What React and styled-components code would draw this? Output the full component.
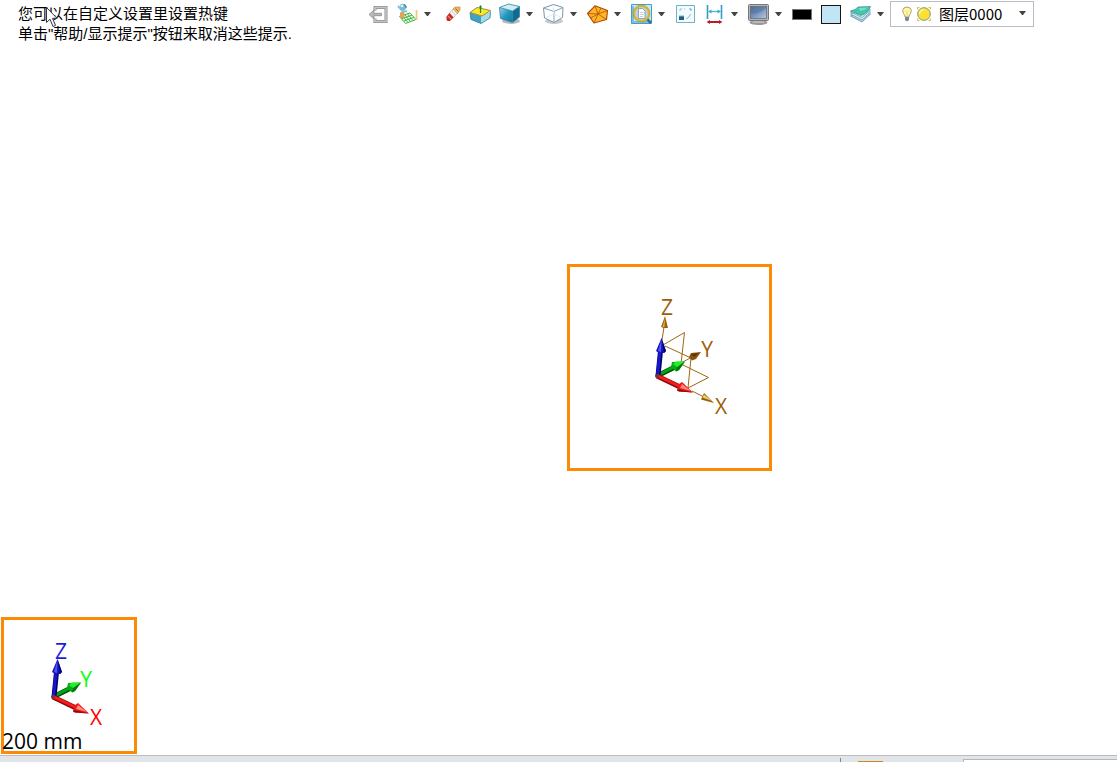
import React, { useState } from "react";
import styled, { createGlobalStyle } from "styled-components";

const GlobalStyle = createGlobalStyle`
  body {
    margin: 0;
    background: #fff;
    font-family: "Liberation Sans", "Noto Sans CJK SC", sans-serif;
    color: #000;
  }
`;

const Page = styled.div`
  display: flex;
  flex-direction: column;
  height: 100vh;
  overflow: hidden;
`;

const Header = styled.header`
  display: flex;
  align-items: flex-start;
`;

const Hints = styled.div`
  position: relative;
  flex: 0 0 349px;
  padding: 4px 0 0 18px;
  font-size: 15px;
  line-height: 20px;
  white-space: nowrap;
`;

const HintLine = styled.p`
  margin: 0;
`;

const Pointer = styled.svg`
  position: absolute;
  left: 45px;
  top: 6px;
`;

const Toolbar = styled.div`
  display: flex;
  align-items: center;
  gap: 2px;
  padding-top: 1px;
`;

const Tools = styled.div`
  display: flex;
  align-items: center;
  gap: 5px;
`;

const ToolGroup = styled.div`
  display: flex;
`;

const ToolButton = styled.button`
  display: flex;
  align-items: center;
  justify-content: center;
  width: ${(props) => (props.$narrow ? "15px" : "24px")};
  height: 24px;
  padding: 0;
  border: 0;
  background: transparent;
`;

const LayerBox = styled.label`
  position: relative;
  display: flex;
  align-items: center;
  gap: 3px;
  box-sizing: border-box;
  width: 144px;
  height: 26px;
  padding-left: 10px;
  border: 1px solid #b9bdc8;
  background: #fff;
`;

const LayerSelect = styled.select`
  appearance: none;
  flex: 1;
  min-width: 0;
  height: 24px;
  padding: 0 0 2px 4px;
  border: 0;
  background: transparent;
  color: #000;
  font-family: "Noto Sans CJK SC", sans-serif;
  font-size: 15px;
`;

const SelectCaret = styled.span`
  position: absolute;
  right: 7px;
  top: 9px;
  display: flex;
  pointer-events: none;
`;

const Canvas = styled.main`
  position: relative;
  flex: 1;
  min-height: 0;
`;

const Frame = styled.section`
  position: absolute;
  box-sizing: border-box;
  border: 3px solid #fb8b05;
`;

const OriginFrame = styled(Frame)`
  left: 567px;
  top: 220px;
  width: 205px;
  height: 207px;
`;

const CornerFrame = styled(Frame)`
  left: 1px;
  bottom: 1px;
  width: 136px;
  height: 137px;
`;

const Drawing = styled.svg`
  display: block;
  font-family: "Open Sans", sans-serif;
  font-size: 21px;
`;

const ScaleLabel = styled.div`
  position: absolute;
  left: -2px;
  bottom: -4px;
  font-family: "Open Sans", sans-serif;
  font-size: 21px;
  line-height: 28px;
  white-space: nowrap;
`;

const StatusBar = styled.footer`
  display: flex;
  align-items: flex-end;
  height: 6px;
  border-top: 1px solid #b9bcc1;
  background: #e1e5e8;
`;

const StatusMessage = styled.div`
  box-sizing: border-box;
  width: 841px;
  height: 4px;
  border-right: 1px solid #81868c;
`;

const StatusTab = styled.div`
  width: 25px;
  height: 1px;
  margin: 0 80px 0 17px;
  background: #c88a1e;
`;

const StatusField = styled.div`
  flex: 1;
  height: 2px;
  border: 1px solid #b4b8bd;
  border-width: 1px 0 0 1px;
  background: #fff;
`;

const Caret = () => (
  <svg width="7" height="4" viewBox="0 0 7 4">
    <path d="M0 0H7L4 4H3Z" fill="#444" />
  </svg>
);

const Icon = ({ children }) => (
  <svg width="24" height="24" viewBox="0 0 24 24" fill="none">
    {children}
  </svg>
);

const ExitIcon = () => (
  <Icon>
    <path d="M8 8.500V5.500H19V19.500H8V16.500" stroke="#8e8e8e" strokeWidth="3" />
    <path d="M8 8V5.500H19V19.500H8V17" stroke="#c6c6c6" strokeWidth="1.500" />
    <path d="M2 12.500L7 8V11.300H14.500V13.700H7V17Z" fill="#b8b8b8" stroke="#8a8a8a" strokeWidth=".8" />
  </Icon>
);

const PlaneIcon = () => (
  <Icon>
    <path d="M3.500 14.500L14 11L20 17.500L9.500 21.500Z" fill="#f2fdef" stroke="#3fba3f" />
    <path d="M6 13.500L12 20.500M8.700 12.600L14.500 19.600M11.300 11.700L17 18.600M5.500 16.800L16 13.200M7.500 19L18 15.300" stroke="#3fba3f" />
    <path d="M20.500 8V18" stroke="#f2c57c" strokeWidth="1.800" />
    <path d="M2 4L6.500 9L11 9.500" stroke="#7cc5dc" strokeWidth="2" />
    <circle cx="7" cy="5" r="3.300" fill="#79bcd6" />
    <circle cx="6" cy="4" r="1.300" fill="#e6f7fb" />
    <path d="M8 2.500L10 4V6" stroke="#4f6f80" />
    <rect x="4" y="10" width="4.500" height="6" rx="1" fill="#e5a05e" />
  </Icon>
);

const EraserIcon = () => (
  <Icon>
    <path d="M12.500 7.500L15 5H20V8L17 12Z" fill="#f2b45a" stroke="#b98238" strokeWidth=".6" />
    <path d="M15.500 6.500L18.500 9.500" stroke="#a9692d" />
    <path d="M9.500 11L13 7L17 11.500L13.500 15.500Z" fill="#faf8f5" stroke="#aaa" strokeWidth=".7" />
    <path d="M11.500 9L15.500 13.500" stroke="#dedbd8" strokeWidth="1.500" />
    <path d="M6.500 14.500L9.500 11L13.500 15.500L10 19H7.500L6.500 17.500Z" fill="#c4281f" />
    <path d="M8 14L11.500 17.500" stroke="#e98478" strokeWidth="1.200" />
  </Icon>
);

const FaceBoxIcon = () => (
  <Icon>
    <path d="M1 10.500L12 14V21.500L2 17.500Z" fill="#3fa2c4" />
    <path d="M12 14L21.500 9.500L21 16L12 21.500Z" fill="#a7dcea" />
    <path d="M1 10.500L2 17.500L12 21.500L21 16L21.500 9.500" stroke="#2b7794" strokeWidth=".8" />
    <path d="M1 10.500L8 5.500L21.500 8.500L13 14Z" fill="#ffe62a" stroke="#978f32" />
    <path d="M11.500 4V11" stroke="#238b3a" strokeWidth="1.200" />
    <path d="M9.800 5.500L11.500 3L13.200 5.500Z" fill="#238b3a" />
  </Icon>
);

const ShadedIcon = () => (
  <Icon>
    <defs>
      <linearGradient id="cubeFront" x1="0" y1="0" x2="1" y2="1">
        <stop offset="0" stopColor="#9fd6e8" />
        <stop offset="0.5" stopColor="#2597be" />
        <stop offset="1" stopColor="#17779e" />
      </linearGradient>
    </defs>
    <ellipse cx="13" cy="19" rx="9" ry="3" fill="#b9b9b9" />
    <path d="M1.500 5.500L14.500 9V20.500L2.500 16.500Z" fill="url(#cubeFront)" />
    <path d="M14.500 9L21.500 4.500V15L14.500 20.500Z" fill="#116b91" />
    <path d="M1.500 5.500L10.500 2L21.500 4.500L14.500 9Z" fill="#d2eef5" />
    <path d="M1.500 5.500L10.500 2L21.500 4.500V15L14.500 20.500L2.500 16.500ZM1.500 5.500L14.500 9V20M14.500 9L21.500 4.500" stroke="#2885a7" strokeWidth=".8" />
  </Icon>
);

const WireIcon = () => (
  <Icon>
    <ellipse cx="12" cy="19" rx="9" ry="3" fill="#c9c9c9" />
    <path d="M11.500 2.500L21 5.500L20.500 15.500L12 20.500L2.500 16L1.500 6Z" fill="#fff" stroke="#7797ab" />
    <path d="M1.500 6L12 9.500L21 5.500M12 9.500V20.500" stroke="#83a7bd" />
    <path d="M11.500 3V12L3 16M11.500 12L20 15.500" stroke="#dceaf0" strokeWidth=".8" />
  </Icon>
);

const MeshIcon = () => (
  <Icon>
    <path
      d="M9 3.800L21.500 8.500L20.500 17.500L8 21L1.500 11.500Z"
      fill="#ffb727"
      stroke="#ad4c08"
      strokeWidth="1.200"
      strokeLinejoin="round"
    />
    <path d="M9 3.800L12 12L8 21M1.500 11.500L12 12L21.500 8.500M12 12L20.500 17.500M4.500 16L12 12L15 6.200" stroke="#b9570c" strokeWidth=".9" />
  </Icon>
);

const ZoomIcon = () => (
  <Icon>
    <path d="M1.500 2.500H21.500V21.500H1.500Z" fill="#c4e9f7" stroke="#469fc3" />
    <path d="M3 4V20H20" stroke="#79c1dc" strokeWidth="2" />
    <path d="M16.500 16.500L21 21" stroke="#2a7396" strokeWidth="2.500" />
    <circle cx="11.500" cy="11.500" r="7.500" fill="#b9d4de" stroke="#e3b52f" strokeWidth="2" />
    <circle cx="11.500" cy="11.500" r="8.500" stroke="#9c863e" strokeWidth=".5" />
    <path d="M8.500 6.500H12.500L15 9V16.500H8.500Z" fill="#fff" stroke="#7c929d" strokeWidth=".8" />
    <path d="M10 10.500H13.500M10 12.500H13.500M10 14.500H13.500" stroke="#b9c8ce" strokeWidth=".8" />
  </Icon>
);

const FitIcon = () => (
  <Icon>
    <path d="M2.500 3.500H20.500V20.500H2.500Z" fill="#f4fbfd" stroke="#6cb4cb" />
    <path d="M6 9V7H8M10 7H11" stroke="#87c2d3" />
    <path d="M15 7H17V9M16.500 12L15 15L12 17" stroke="#7fbfd1" />
    <path d="M15.500 6L18 7L17 9Z" fill="#7fbfd1" />
    <rect x="5" y="14" width="5" height="4" fill="#235e7d" />
    <path d="M5 14H10" stroke="#70b6d1" />
  </Icon>
);

const MeasureIcon = () => (
  <Icon>
    <path d="M4.500 3V17M18.500 3V17" stroke="#319ec4" strokeWidth="1.600" />
    <path d="M6 9.500H17" stroke="#52b6d3" strokeWidth="1.300" />
    <path d="M5 9.500L8.500 7.500V11.500ZM18 9.500L14.500 7.500V11.500Z" fill="#42aaca" />
    <path d="M5 20H18" stroke="#b91e27" strokeWidth="2" />
    <path d="M3.500 20L7 18V22ZM19.500 20L16 18V22Z" fill="#b91e27" />
  </Icon>
);

const MonitorIcon = () => (
  <Icon>
    <defs>
      <linearGradient id="screen" x1="0" y1="0" x2="1" y2="1">
        <stop offset="0" stopColor="#4e6d98" />
        <stop offset="0.5" stopColor="#7896bd" />
        <stop offset="1" stopColor="#b7c8dc" />
      </linearGradient>
    </defs>
    <ellipse cx="11.500" cy="20.500" rx="9" ry="2.500" fill="#999" />
    <path d="M7 18H16L18 21H5Z" fill="#b9b9b9" />
    <rect x="1.500" y="2.500" width="20" height="16" rx="1" fill="#b5b5b5" stroke="#777" />
    <rect x="3.500" y="4.500" width="16" height="12" fill="url(#screen)" stroke="#596679" strokeWidth=".7" />
    <path d="M4 12Q13 12 19 6V5H4Z" fill="#526c92" opacity=".45" />
  </Icon>
);

const LineColorIcon = () => (
  <Icon>
    <rect x="1.500" y="7.500" width="19" height="10" fill="#000" stroke="#777" />
  </Icon>
);

const FillColorIcon = () => (
  <Icon>
    <rect x="1.500" y="3.500" width="19" height="18" fill="#c0e6f5" stroke="#21100f" />
  </Icon>
);

const LayersIcon = () => (
  <Icon>
    <path d="M1.500 14L12 10L21.500 12L13 20Z" fill="#b7d2df" stroke="#6290a5" strokeWidth=".8" />
    <path d="M1.500 12L12 8L21.500 10L13 18Z" fill="#d9eef5" stroke="#5e9cb3" strokeWidth=".8" />
    <path d="M1.500 10L11 6L21.500 8L13 15.500Z" fill="#e5f6f8" stroke="#5e9cb3" strokeWidth=".8" />
    <path d="M1.500 9Q7 8 9 5L21.500 4.500Q19 11 12 13.500Z" fill="#43c6ae" stroke="#278f80" strokeWidth=".7" />
    <path d="M10 6L19 5.500Q16 8 11 9Z" fill="#7dddca" />
  </Icon>
);

const BulbIcon = () => (
  <svg width="12" height="16" viewBox="0 0 12 16">
    <path d="M4 11Q4 9 2.500 7.500Q.5 4 3 2Q6 0 9 2Q11.500 4 9.500 7.500Q8 9 8 11Z" fill="#fff9ae" stroke="#a8935b" strokeWidth=".9" />
    <path d="M4 11H8V14L6 15.500L4 14Z" fill="#78899b" />
    <path d="M5.500 10V6L4 4M6.500 10V6L8 4" stroke="#f0d779" strokeWidth=".6" fill="none" />
  </svg>
);

const SunIcon = () => (
  <svg width="16" height="16" viewBox="0 0 16 16">
    <path d="M1 1H4L1 4ZM15 1V4L12 1ZM1 15V12L4 15ZM15 15H12L15 12Z" fill="#e3c537" />
    <circle cx="8" cy="8" r="6.300" fill="#ffdf32" stroke="#6d9d8d" />
    <path d="M3.500 8Q4 4 8 3.500" stroke="#fff3a0" strokeWidth="1.500" fill="none" />
  </svg>
);

const tools = [
  { name: "退出", Glyph: ExitIcon },
  { name: "工作平面", Glyph: PlaneIcon, menu: true },
  { name: "擦除", Glyph: EraserIcon },
  { name: "面", Glyph: FaceBoxIcon },
  { name: "着色", Glyph: ShadedIcon, menu: true },
  { name: "线框", Glyph: WireIcon, menu: true },
  { name: "网格", Glyph: MeshIcon, menu: true },
  { name: "缩放", Glyph: ZoomIcon, menu: true },
  { name: "适合窗口", Glyph: FitIcon },
  { name: "测量", Glyph: MeasureIcon, menu: true },
  { name: "显示", Glyph: MonitorIcon, menu: true },
  { name: "线条颜色", Glyph: LineColorIcon },
  { name: "填充颜色", Glyph: FillColorIcon },
  { name: "图层", Glyph: LayersIcon, menu: true },
];

// x, y, z arrows around a local origin
const Triad = ({ x, y }) => (
  <g transform={`translate(${x} ${y})`}>
    <path d="M1 -1L17 -9" stroke="#054d05" strokeWidth="5" />
    <path d="M1 -1.500L17 -9.500" stroke="#00a814" strokeWidth="3" />
    <path d="M27 -14.500L14 -14L13 -9L18 -4.500L21 -6Z" fill="#00ad13" />
    <path d="M27 -14.500L18 -14.500L15 -12L19 -9Z" fill="#24ed31" />
    <path d="M27 -14.500L19 -8.500L18 -4.500L21 -6Z" fill="#067209" />
    <path d="M0 0L2.500 -25" stroke="#000066" strokeWidth="5" />
    <path d="M-.5 0L2 -25" stroke="#1616cf" strokeWidth="3" />
    <path d="M3.500 -38L-2 -25L1 -23H6L8 -25Z" fill="#1414be" />
    <path d="M3.500 -37L0 -25L3 -24Z" fill="#5555ed" />
    <path d="M3.500 -38L8 -25L6 -23Z" fill="#000078" />
    <path d="M-1 0L23 11.500" stroke="#900808" strokeWidth="5" />
    <path d="M-1 -.5L23 11" stroke="#f51d1d" strokeWidth="3" />
    <path d="M35 16.500L24 6L21 8L19 14.500L21 15.500Z" fill="#ef1717" />
    <path d="M33 15L24 8L22 12Z" fill="#ff8b82" />
    <path d="M35 16.500L20 13L19 14.500L21 15.500Z" fill="#970b0b" />
    <circle cx="-1" cy="0" r="2" fill="#6e3349" />
  </g>
);

const OriginDrawing = () => (
  <Drawing width="199" height="201" viewBox="0 0 199 201">
    <g fill="none" stroke="#9c6613">
      <path d="M92 73L94 60M93 78L114.500 65.500L111 97L138.500 110.500L118 121L121 91L95 79" />
      <path d="M111 96L122 90M122 124L134 130" />
    </g>
    <path d="M95 49L91 60L94 61H98Z" fill="#9b6108" />
    <path d="M95 51L92.500 60H94.500Z" fill="#deb15d" />
    <path d="M131 85L121 86L119 90L122 93.500L126 92Z" fill="#8a5408" />
    <path d="M129 86L124 90L121 87Z" fill="#5c3602" />
    <path d="M144 136L134 126L131 132.500Z" fill="#916007" />
    <path d="M142 134L134 127.500L132.500 130.500Z" fill="#f2cf6d" />
    <Triad x={88} y={109} />
    <g fill="#9b5f0a" textAnchor="middle">
      <text x="97" y="48">Z</text>
      <text x="137" y="90">Y</text>
      <text x="151" y="147">X</text>
    </g>
  </Drawing>
);

const CornerDrawing = () => (
  <Drawing width="130" height="131" viewBox="0 0 130 131">
    <Triad x={50} y={77} />
    <g textAnchor="middle">
      <text x="57" y="39" fill="#1b1bdb">Z</text>
      <text x="82" y="67" fill="#0aff0a">Y</text>
      <text x="92" y="105" fill="#ff0000">X</text>
    </g>
  </Drawing>
);

function App() {
  const [layer, setLayer] = useState("0000");

  return (
    <Page>
      <GlobalStyle />
      <Header>
        <Hints>
          <HintLine>您可以在自定义设置里设置热键</HintLine>
          <HintLine>单击"帮助/显示提示"按钮来取消这些提示.</HintLine>
          <Pointer width="14" height="22" viewBox="0 0 14 22">
            <path
              d="M1.500 1.500V16.500L5 13.200L8 20.500L10.500 19.400L7.500 12.300H12Z"
              fill="#fff"
              stroke="#343442"
            />
          </Pointer>
        </Hints>
        <Toolbar>
          <Tools>
            {tools.map(({ name, Glyph, menu }) => (
              <ToolGroup key={name}>
                <ToolButton type="button" aria-label={name}>
                  <Glyph />
                </ToolButton>
                {menu && (
                  <ToolButton type="button" $narrow aria-label={`${name}菜单`}>
                    <Caret />
                  </ToolButton>
                )}
              </ToolGroup>
            ))}
          </Tools>
          <LayerBox>
            <BulbIcon />
            <SunIcon />
            <LayerSelect
              aria-label="当前图层"
              value={layer}
              onChange={(e) => setLayer(e.target.value)}
            >
              <option value="0000">图层0000</option>
            </LayerSelect>
            <SelectCaret>
              <Caret />
            </SelectCaret>
          </LayerBox>
        </Toolbar>
      </Header>
      <Canvas>
        <OriginFrame>
          <OriginDrawing />
        </OriginFrame>
        <CornerFrame>
          <CornerDrawing />
          <ScaleLabel>200 mm</ScaleLabel>
        </CornerFrame>
      </Canvas>
      <StatusBar>
        <StatusMessage />
        <StatusTab />
        <StatusField />
      </StatusBar>
    </Page>
  );
}

export default App;
